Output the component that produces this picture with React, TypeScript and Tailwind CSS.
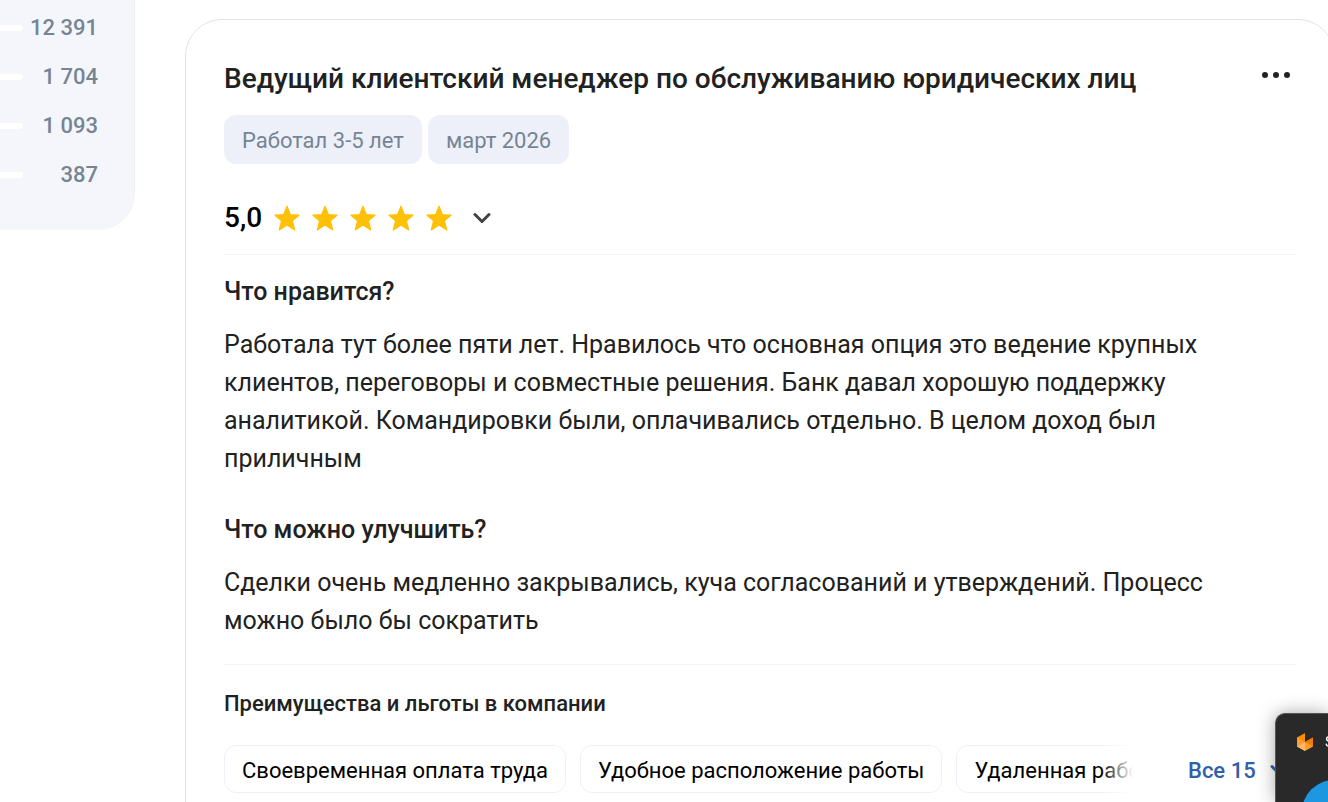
import React from "react";

const ratingCounts = ["12 391", "1 704", "1 093", "387"];

const benefits = [
  "Своевременная оплата труда",
  "Удобное расположение работы",
  "Удаленная работа",
];

function RatingSidebar() {
  return (
    <aside className="w-[135px] h-[230px] shrink-0 overflow-hidden rounded-br-[37px] border-r border-[#eff0f3] bg-[#f4f6fc] pt-[3px]">
      <ul className="flex flex-col">
        {ratingCounts.map((count) => (
          <li key={count} className="flex h-[49px] items-center pr-9 text-[22px] font-medium text-[#768594]">
            <span className="h-1.5 w-[23px] rounded-r-full bg-white" />
            <span className="flex-1 text-right whitespace-nowrap">{count}</span>
          </li>
        ))}
      </ul>
    </aside>
  );
}

function Star() {
  return (
    <svg className="h-[26px] w-[26px]" viewBox="0 0 26 26" fill="#ffc107" aria-hidden="true">
      <path
        d="M13 1.2 16.4 9.7 25 10.2 18.4 15.7 20.7 25 13 20 5.3 25 7.6 15.7 1 10.2 9.6 9.7Z"
        stroke="#ffc107"
        strokeWidth="1.2"
        strokeLinejoin="round"
      />
    </svg>
  );
}

function Chevron({ className }: { className: string }) {
  return (
    <svg className={className} viewBox="0 0 18 12" fill="none" aria-hidden="true">
      <path d="M2 2.5 9 9.5 16 2.5" stroke="currentColor" strokeWidth="3" strokeLinecap="round" strokeLinejoin="round" />
    </svg>
  );
}

function ReviewSection({ title, text }: { title: string; text: string }) {
  return (
    <section>
      <h3 className="text-[25px] leading-[38px] font-medium">{title}</h3>
      <p className="mt-[15px] max-w-[1000px] text-[25px] leading-[38px]">{text}</p>
    </section>
  );
}

function Benefits() {
  return (
    <section>
      <h4 className="text-[22px] leading-8 font-medium">Преимущества и льготы в компании</h4>
      <div className="mt-[25px] flex items-center">
        <div className="relative w-[909px] overflow-hidden">
          <ul className="flex gap-3.5">
            {benefits.map((benefit) => (
              <li
                key={benefit}
                className="flex h-12 shrink-0 items-center rounded-xl border border-[#eef0f9] px-[17px] pt-0.5 text-[22px] text-black"
              >
                {benefit}
              </li>
            ))}
          </ul>
          <div className="absolute inset-y-0 right-0 w-8 bg-gradient-to-r from-white/0 to-white" />
        </div>
        <button type="button" className="ml-[55px] flex items-center gap-3.5 pt-0.5 text-[22px] font-medium whitespace-nowrap text-[#315fa8]">
          Все 15
          <Chevron className="h-3 w-[18px]" />
        </button>
      </div>
    </section>
  );
}

function ReviewCard() {
  return (
    <article className="mt-[19px] -mr-[7px] ml-[50px] min-w-0 flex-1 rounded-[37px] border border-[#dfe4ea] px-[38px] pt-10 pb-20">
      <header className="flex items-start justify-between">
        <h2 className="text-[28px] leading-[38px] font-medium">
          Ведущий клиентский менеджер по обслуживанию юридических лиц
        </h2>
        <button type="button" aria-label="Ещё" className="mt-[7px] mr-1.5 flex h-[15px] items-center gap-[5px]">
          <span className="size-1.5 rounded-full bg-[#212121]" />
          <span className="size-1.5 rounded-full bg-[#212121]" />
          <span className="size-1.5 rounded-full bg-[#212121]" />
        </button>
      </header>

      <div className="mt-[17px] flex gap-1.5 text-[22px] text-[#768594]">
        <span className="flex h-[49px] items-center rounded-xl bg-[#edf0f9] px-[18px] pt-0.5">Работал 3-5 лет</span>
        <span className="flex h-[49px] items-center rounded-xl bg-[#edf0f9] px-[18px] pt-0.5">март 2026</span>
      </div>

      <div className="mt-[35px] flex h-[38px] items-center">
        <span className="text-[28px] leading-[38px] font-medium text-black">5,0</span>
        <div className="ml-3 flex gap-3">
          <Star />
          <Star />
          <Star />
          <Star />
          <Star />
        </div>
        <button type="button" aria-label="Показать оценки" className="ml-[21px] text-[#424242]">
          <Chevron className="h-3 w-[18px]" />
        </button>
      </div>

      <div className="mt-[17px] border-y border-[#f3f4f6] pt-[18px] pb-6">
        <ReviewSection
          title="Что нравится?"
          text="Работала тут более пяти лет. Нравилось что основная опция это ведение крупных клиентов, переговоры и совместные решения. Банк давал хорошую поддержку аналитикой. Командировки были, оплачивались отдельно. В целом доход был приличным"
        />
        <div className="h-[33px]" />
        <ReviewSection
          title="Что можно улучшить?"
          text="Сделки очень медленно закрывались, куча согласований и утверждений. Процесс можно было бы сократить"
        />
      </div>

      <div className="pt-[23px]">
        <Benefits />
      </div>
    </article>
  );
}

function MediaPopup() {
  return (
    <div className="fixed right-0 bottom-0 h-[89px] w-[53px] overflow-hidden rounded-tl-[10px] border-t border-l border-[#555] bg-[#292929] shadow-[0_0_18px_rgba(0,0,0,0.35)]">
      <div className="flex items-center gap-3 pt-[18px] pl-[21px] text-[15px] leading-5 whitespace-nowrap text-white">
        <svg className="h-[18px] w-4 shrink-0" viewBox="0 0 16 18" aria-hidden="true">
          <path d="M0 4.5 8 0V9L0 13.5Z" fill="#fb8c00" />
          <path d="M0 4.5 8 9 0 13.5Z" fill="#ff9d2e" />
          <path d="M8 9 16 4.5V13.5L8 18 0 13.5Z" fill="#ff9d2e" />
          <path d="M8 9 16 4.5V13.5Z" fill="#f57c00" />
          <path d="M8 9V18L0 13.5Z" fill="#ffb865" />
        </svg>
        <span>S</span>
      </div>
      <div className="absolute top-[66px] left-[26px] size-16 rounded-full bg-[#1c97e0]" />
    </div>
  );
}

export default function App() {
  return (
    <main className="flex h-screen items-start overflow-hidden bg-white font-[Roboto,sans-serif] text-[#212121]">
      <RatingSidebar />
      <ReviewCard />
      <MediaPopup />
    </main>
  );
}
